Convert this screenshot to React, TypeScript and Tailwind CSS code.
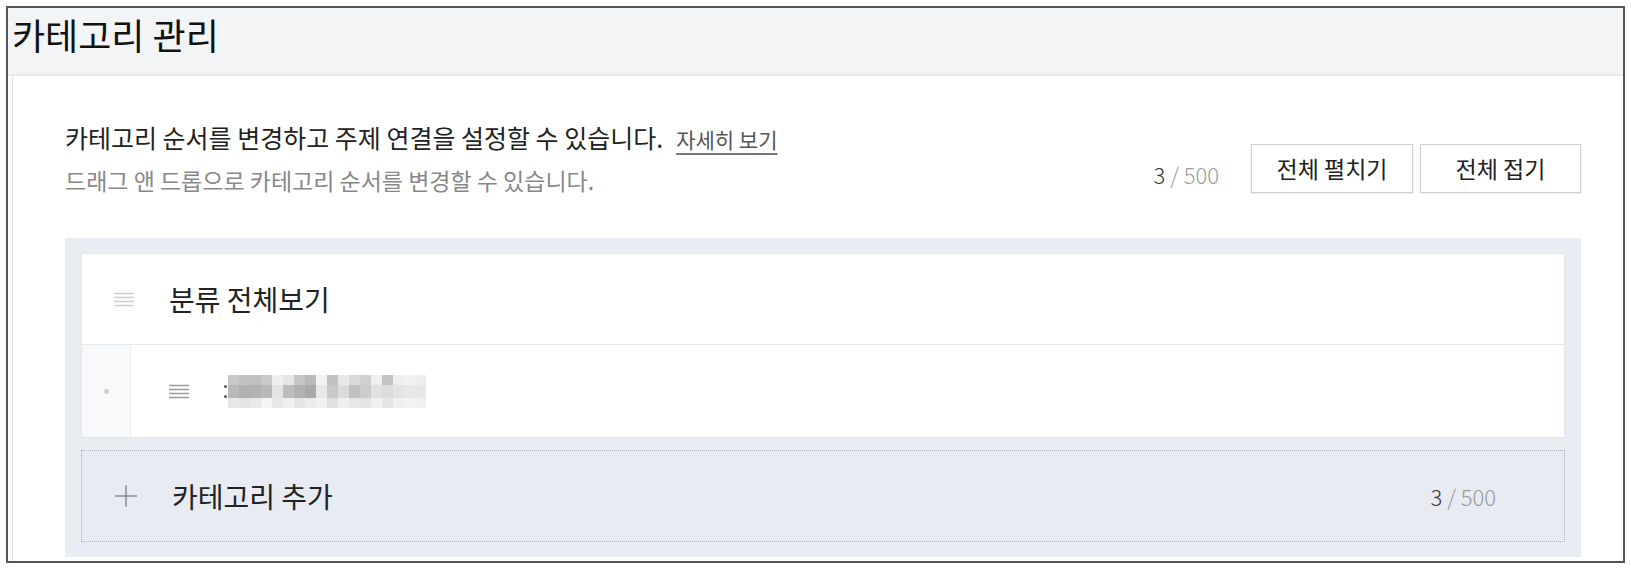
import React from "react";

const font = { fontFamily: '"Noto Sans CJK KR", "Noto Sans", sans-serif' };

// pixelated (blurred) category name, one class per cell
const mosaic: string[][] = [
  ["bg-[#c9c9c9]", "bg-[#c2c2c2]", "bg-[#c0c0c0]", "bg-[#cacaca]", "bg-[#efefef]", "bg-[#e6e6e6]", "bg-[#c6c6c6]", "bg-[#bababa]", "bg-[#f3f3f3]", "bg-[#c2c2c2]", "bg-[#e8e8e8]", "bg-[#d9d9d9]", "bg-[#d0d0d0]", "bg-[#efefef]", "bg-[#c4c4c4]", "bg-[#efefef]", "bg-[#f2f2f2]", "bg-[#eeeeee]"],
  ["bg-[#b9b9b9]", "bg-[#b1b1b1]", "bg-[#b3b3b3]", "bg-[#b9b9b9]", "bg-[#e4e4e4]", "bg-[#bdbdbd]", "bg-[#b2b2b2]", "bg-[#a9a9a9]", "bg-[#e9e9e9]", "bg-[#c9c9c9]", "bg-[#dcdcdc]", "bg-[#c1c1c1]", "bg-[#cccccc]", "bg-[#e1e1e1]", "bg-[#dcdcdc]", "bg-[#e4e4e4]", "bg-[#e8e8e8]", "bg-[#e7e7e7]"],
  ["bg-[#e8e8e8]", "bg-[#e4e4e4]", "bg-[#e9e9e9]", "bg-[#f4f4f4]", "bg-[#e8e8e8]", "bg-[#f0f0f0]", "bg-[#e5e5e5]", "bg-[#ececec]", "bg-[#f1f1f1]", "bg-[#e1e1e1]", "bg-[#f0f0f0]", "bg-[#e8e8e8]", "bg-[#e4e4e4]", "bg-[#f0f0f0]", "bg-[#e5e5e5]", "bg-[#f0f0f0]", "bg-[#f3f3f3]", "bg-[#f0f0f0]"],
];

const DragHandle = ({ color }: { color: string }) => (
  <svg width="20" height="15" viewBox="0 0 20 15" fill="none" stroke={color} strokeWidth="1.4">
    <path d="M0 1.5h20M0 5.5h20M0 9.5h20M0 13.5h20" />
  </svg>
);

const Count = ({ className }: { className: string }) => (
  <span className={className}>
    <span className="text-[#333]">3</span>
    <span className="text-[#9a9a9a]"> / 500</span>
  </span>
);

const App = () => {
  return (
    <div className="min-h-screen bg-white p-[6px]" style={font}>
      <div className="border-2 border-[#555]">
        <div className="h-[68px] bg-[#f3f4f6] border-b-2 border-[#e6e8eb] pl-[4px] flex items-center">
          <h1 className="text-[36px] text-[#111] leading-none pb-[14px]">카테고리 관리</h1>
        </div>

        <div className="ml-[4px] border-l border-[#e3e5e8] bg-white pl-[52px] pr-[42px] pt-[44px] pb-[4px]">
          <div className="flex justify-between items-start">
            <div>
              <p className="text-[25px] leading-[34px] text-[#222]">
                카테고리 순서를 변경하고 주제 연결을 설정할 수 있습니다.
                <a className="ml-[13px] text-[21px] text-[#555] underline underline-offset-[5px] decoration-[#777]">
                  자세히 보기
                </a>
              </p>
              <p className="mt-[8px] text-[23px] leading-[32px] text-[#888]">
                드래그 앤 드롭으로 카테고리 순서를 변경할 수 있습니다.
              </p>
            </div>
            <div className="mt-[24px] flex items-center">
              <Count className="mt-[12px] mr-[32px] text-[22px] font-light" />
              <button className="w-[162px] h-[49px] border border-[#d0d0d0] bg-white text-[23px] text-[#222] shadow-[0_1px_2px_rgba(0,0,0,0.08)]">
                전체 펼치기
              </button>
              <button className="ml-[7px] w-[161px] h-[49px] border border-[#d0d0d0] bg-white text-[23px] text-[#222] shadow-[0_1px_2px_rgba(0,0,0,0.08)]">
                전체 접기
              </button>
            </div>
          </div>

          <div className="mt-[42px] bg-[#e9ecf3] px-[16px] pt-[15px] pb-[15px]">
            <div className="bg-white border border-[#e3e6ec]">
              <div className="h-[91px] border-b border-[#e6e8ec] flex items-center">
                <div className="w-[87px] pl-[32px]">
                  <DragHandle color="#cfcfcf" />
                </div>
                <span className="text-[28px] text-[#222]">분류 전체보기</span>
              </div>
              <div className="h-[92px] flex">
                <div className="w-[49px] bg-[#f8f9fb] border-r border-[#eceef2] flex items-center justify-center">
                  <span className="w-[5px] h-[5px] rounded-full bg-[#cfd1d5]" />
                </div>
                <div className="flex items-center pl-[38px]">
                  <DragHandle color="#9a9a9a" />
                  <div className="ml-[35px] flex items-center">
                    <div className="flex flex-col gap-[7px] mr-[1px]">
                      <span className="w-[3px] h-[3px] rounded-full bg-[#555]" />
                      <span className="w-[3px] h-[3px] rounded-full bg-[#555]" />
                    </div>
                    <div className="flex flex-col">
                      {mosaic.map((row, r) => (
                        <div key={r} className={r === 1 ? "flex h-[13px]" : "flex h-[10px]"}>
                          {row.map((cell, c) => (
                            <div key={c} className={`w-[11px] h-full ${cell}`} />
                          ))}
                        </div>
                      ))}
                    </div>
                  </div>
                </div>
              </div>
            </div>

            <div className="mt-[12px] h-[92px] border border-dotted border-[#a9adb5] bg-[#e8ebf2] flex items-center justify-between pr-[68px]">
              <div className="flex items-center">
                <div className="w-[90px] pl-[32px]">
                  <svg width="24" height="24" viewBox="0 0 24 24" fill="none" stroke="#8a8d92" strokeWidth="1.5">
                    <path d="M12 1v22M1 12h22" />
                  </svg>
                </div>
                <span className="text-[28px] text-[#222]">카테고리 추가</span>
              </div>
              <Count className="text-[22px] font-light" />
            </div>
          </div>
        </div>
      </div>
    </div>
  );
};

export default App;
